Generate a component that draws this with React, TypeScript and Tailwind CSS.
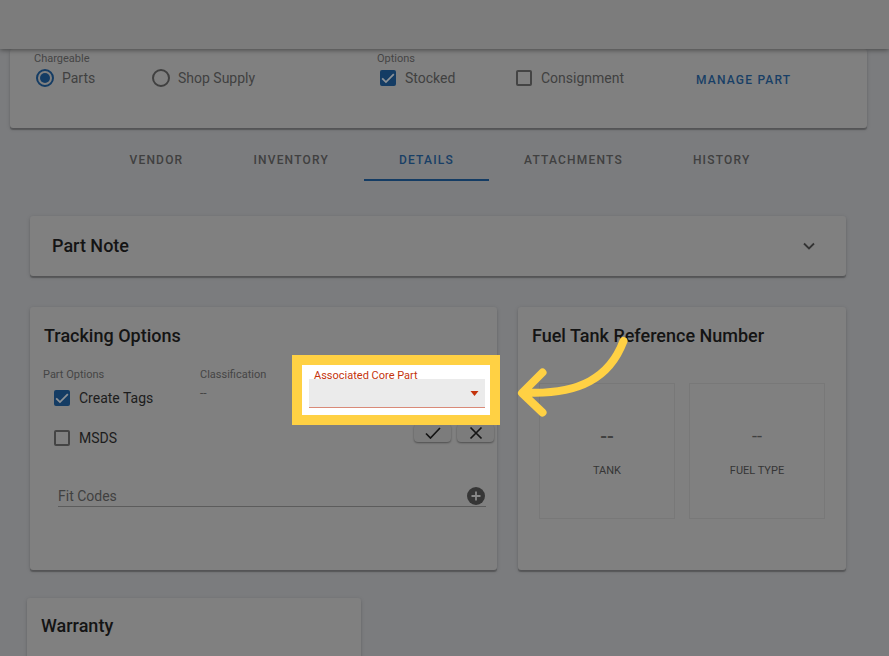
import { useState } from "react";
import type { ReactNode } from "react";

const CARD = "rounded-[3px] bg-[#808080] shadow-[0_2px_1px_rgba(0,0,0,0.25),0_1px_4px_rgba(0,0,0,0.15)]";

function Radio({ label, checked, onChange }: { label: string; checked: boolean; onChange: () => void }) {
  return (
    <label className="flex w-[116px] items-center gap-2 whitespace-nowrap text-sm text-[#404040]">
      <span className="grid size-[18px] shrink-0 place-items-center">
        <input
          type="radio"
          name="chargeable"
          checked={checked}
          onChange={onChange}
          className="col-start-1 row-start-1 size-[18px] appearance-none rounded-full border-2 border-[#404040] checked:border-[#143c64]"
        />
        {checked && <span className="pointer-events-none col-start-1 row-start-1 size-[10px] rounded-full bg-[#143c64]" />}
      </span>
      {label}
    </label>
  );
}

function Check({ label, initial, className }: { label: string; initial: boolean; className: string }) {
  const [on, setOn] = useState(initial);
  return (
    <label className={`flex items-center gap-[9px] whitespace-nowrap text-sm ${className}`}>
      <span className="grid size-4 shrink-0 place-items-center">
        <input
          type="checkbox"
          checked={on}
          onChange={() => setOn(!on)}
          className="col-start-1 row-start-1 size-4 appearance-none rounded-[2px] border-2 border-[#444444] checked:border-[#143c64] checked:bg-[#143c64]"
        />
        {on && (
          <svg viewBox="0 0 24 24" className="pointer-events-none col-start-1 row-start-1 size-[14px]" fill="none" stroke="#8d9297" strokeWidth="3">
            <path d="M2 12.5 8.5 19 22 5.5" />
          </svg>
        )}
      </span>
      {label}
    </label>
  );
}

function Caption({ children }: { children: ReactNode }) {
  return <p className="text-[11px] leading-[13px] text-[#454545]">{children}</p>;
}

function Title({ children }: { children: ReactNode }) {
  return <h2 className="text-lg leading-6 font-medium text-[#141414]">{children}</h2>;
}

function Tile({ label, valueClass }: { label: string; valueClass: string }) {
  return (
    <div className="flex h-[136px] flex-col items-center border border-[#787878] pt-[42px] text-[#404040]">
      <span className={`leading-5 ${valueClass}`}>--</span>
      <span className="mt-[17px] text-[11px] leading-4 text-[#353535]">{label}</span>
    </div>
  );
}

const TABS = ["VENDOR", "INVENTORY", "DETAILS", "ATTACHMENTS", "HISTORY"];

export default function App() {
  const [tab, setTab] = useState("DETAILS");
  const [charge, setCharge] = useState("Parts");

  return (
    <div className="h-screen overflow-hidden bg-[#7b7c7e] font-['Roboto',sans-serif]">
      <header className="relative z-10 h-[49px] bg-[#7c7c7c] shadow-[0_1px_5px_rgba(0,0,0,0.45)]" />

      <section className={`mr-[22px] ml-[10px] grid h-[79px] grid-cols-[343fr_319fr_171fr] pl-6 pt-[3px] ${CARD}`}>
        <div>
          <Caption>Chargeable</Caption>
          <div className="mt-[3px] flex pl-[2px]">
            <Radio label="Parts" checked={charge === "Parts"} onChange={() => setCharge("Parts")} />
            <Radio label="Shop Supply" checked={charge === "Shop"} onChange={() => setCharge("Shop")} />
          </div>
        </div>
        <div>
          <Caption>Options</Caption>
          <div className="mt-[3px] flex pl-[3px] text-[#404040]">
            <Check label="Stocked" initial className="w-[136px]" />
            <Check label="Consignment" initial={false} className="" />
          </div>
        </div>
        <div className="pt-5">
          <button type="button" className="block text-xs leading-4 font-medium tracking-widest text-[#183f66]">MANAGE PART</button>
        </div>
      </section>

      <nav className="mr-[39px] ml-[30px] mt-3 flex justify-center" role="tablist">
        {TABS.map((t) => (
          <button
            key={t}
            type="button"
            role="tab"
            aria-selected={tab === t}
            onClick={() => setTab(t)}
            className={`h-[41px] border-b-2 px-[35px] text-xs font-medium tracking-widest ${
              tab === t ? "border-[#143c64] text-[#183f66]" : "border-transparent text-[#404040]"
            }`}
          >
            {t}
          </button>
        ))}
      </nav>

      <main className="mr-[43px] ml-[30px] mt-[35px]">
        <section className={`flex h-[60px] items-center justify-between pr-[31px] pl-[22px] ${CARD}`}>
          <Title>Part Note</Title>
          <button type="button" aria-label="Expand part note">
            <svg viewBox="0 0 12 12" className="size-3" fill="none" stroke="#333333" strokeWidth="1.8">
              <path d="M1 3.5 6 8.5 11 3.5" />
            </svg>
          </button>
        </section>

        <div className="mt-[31px] grid grid-cols-[467fr_328fr] gap-[21px]">
          <section className={`relative h-[263px] pt-[17px] pr-[11px] pl-[13px] ${CARD}`}>
            <div className="pl-px">
              <Title>Tracking Options</Title>
            </div>
            <div className="mt-5 flex">
              <div className="w-[157px]">
                <Caption>Part Options</Caption>
                <div className="mt-[7px] flex flex-col gap-5 pl-[11px] text-[#1c1c1c]">
                  <Check label="Create Tags" initial className="" />
                  <Check label="MSDS" initial={false} className="" />
                </div>
              </div>
              <div>
                <Caption>Classification</Caption>
                <p className="mt-1 text-xs leading-4 text-[#454545]">--</p>
              </div>
              <div className="-mr-2 ml-auto flex items-start gap-[6px] pt-[56px]">
                <button type="button" aria-label="Save" className="grid h-[18px] w-[37px] place-items-center rounded-[4px] bg-[#7c7c7c] shadow-[0_1px_2px_rgba(0,0,0,0.4)]">
                  <svg viewBox="0 0 16 12" className="h-3 w-4" fill="none" stroke="#141414" strokeWidth="1.7">
                    <path d="M1 6.5 5.5 11 15 1" />
                  </svg>
                </button>
                <button type="button" aria-label="Cancel" className="grid h-[18px] w-[37px] place-items-center rounded-[4px] bg-[#7c7c7c] shadow-[0_1px_2px_rgba(0,0,0,0.4)]">
                  <svg viewBox="0 0 14 14" className="size-[14px]" fill="none" stroke="#141414" strokeWidth="1.7">
                    <path d="M1.5 1.5 12.5 12.5M12.5 1.5 1.5 12.5" />
                  </svg>
                </button>
              </div>
            </div>
            <div className="mt-[37px] ml-[15px] flex h-[22px] items-center border-b border-[#5c5c5c]">
              <input
                aria-label="Fit Codes"
                placeholder="Fit Codes"
                className="min-w-0 flex-1 bg-transparent text-sm text-[#404040] outline-none placeholder:text-[#404040]"
              />
              <button type="button" aria-label="Add fit code" className="mr-px">
                <svg viewBox="0 0 18 18" className="size-[18px]">
                  <circle cx="9" cy="9" r="9" fill="#363636" />
                  <path d="M9 4.5v9M4.5 9h9" stroke="#888888" strokeWidth="1.8" />
                </svg>
              </button>
            </div>

            <div className="absolute top-12 -right-[3px] z-10 h-[70px] w-[208px] border-10 border-[#ffd144] bg-white pt-[5px] pr-[5px] pl-[7px]">
              <label htmlFor="core-part" className="block pl-[5px] text-[11px] leading-3 text-[#c4330c]">Associated Core Part</label>
              <div className="-mt-[3px] grid items-center">
                <select id="core-part" className="col-start-1 row-start-1 h-[29px] w-full appearance-none border-b border-[#d98a78] bg-[#ebebeb] text-sm outline-none">
                  <option value="" />
                </select>
                <svg viewBox="0 0 8 5" className="pointer-events-none col-start-1 row-start-1 mr-[6px] h-[5px] w-[9px] justify-self-end">
                  <path d="M0 0h8L4 5z" fill="#c4330c" />
                </svg>
              </div>
            </div>
          </section>

          <section className={`relative pt-[17px] ${CARD}`}>
            <div className="pl-[14px]">
              <Title>Fuel Tank Reference Number</Title>
            </div>
            <div className="mt-[35px] grid grid-cols-2 gap-[14px] px-[21px]">
              <Tile label="TANK" valueClass="text-xl font-medium" />
              <Tile label="FUEL TYPE" valueClass="text-lg" />
            </div>
            <svg viewBox="517 336 112 82" className="absolute top-[29px] -left-px h-[82px] w-[112px]" fill="none" stroke="#ffd144" strokeWidth="8" strokeLinecap="round" strokeLinejoin="round">
              <path d="M623.5 341C610 377 580 395 525 392.500M542.500 372.500 522 393 542.500 412.500" />
            </svg>
          </section>
        </div>
      </main>

      <section className={`mt-7 ml-[27px] h-[120px] w-[334px] pt-4 pl-[14px] ${CARD}`}>
        <Title>Warranty</Title>
      </section>
    </div>
  );
}
